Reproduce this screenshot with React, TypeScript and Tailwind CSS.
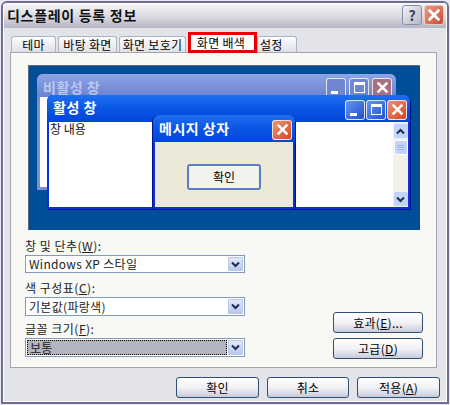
import React from "react";

const font = { fontFamily: '"Noto Sans CJK KR", "Liberation Sans", sans-serif' };

function Chevron({ className = "" }: { className?: string }) {
  return (
    <svg width="9" height="7" viewBox="0 0 9 7" className={className}>
      <path d="M1 1.5 L4.5 5 L8 1.5" fill="none" stroke="#1f2a55" strokeWidth="2" />
    </svg>
  );
}

function CloseX({ size = 12 }: { size?: number }) {
  return (
    <svg width={size} height={size} viewBox="0 0 12 12">
      <path d="M1.5 1.5 L10.5 10.5 M10.5 1.5 L1.5 10.5" stroke="#fff" strokeWidth="2.4" />
    </svg>
  );
}

function Tab({ label, className }: { label: string; className: string }) {
  return (
    <div className={`${className} h-[17px] mt-[8px] rounded-t-[3px] border border-b-0 border-[#a9b4c4] bg-gradient-to-b from-white to-[#dddde6] flex items-center text-[12px] text-black tracking-[0.3px]`}>
      {label}
    </div>
  );
}

function Btn({ children, w }: { children: React.ReactNode; w: string }) {
  return (
    <div className={`${w} h-[21px] rounded-[3px] border border-[#2f4f73] bg-gradient-to-b from-white via-[#f2f2f6] to-[#c9cbdb] flex items-center justify-center text-[12px] text-black tracking-[0.3px]`}>
      {children}
    </div>
  );
}

function Select({ text, selected, h = "h-[18px]" }: { text: string; selected?: boolean; h?: string }) {
  return (
    <div className={`w-[220px] ${h} border border-[#7f9db9] bg-white flex items-stretch p-px`}>
      <div className={`flex-1 flex items-center pl-[2px] text-[12px] text-[#222] tracking-[0.3px] ${selected ? "bg-[#b2b4bf] border border-dotted border-black pl-[1px]" : ""}`}>
        {text}
      </div>
      <div className="w-[15px] ml-px rounded-[1px] border border-[#b9c6e6] bg-gradient-to-b from-[#e4e9f6] to-[#b8c8ee] flex items-center justify-center">
        <Chevron />
      </div>
    </div>
  );
}

function Label({ before, k, after = "):" }: { before: string; k: string; after?: string }) {
  return (
    <div className="h-[18px] flex items-center text-[12px] text-[#222] tracking-[0.5px] whitespace-pre">
      {before}(<span className="underline">{k}</span>{after}
    </div>
  );
}

function MiniBtn({ kind, dim }: { kind: "min" | "max" | "close"; dim?: boolean }) {
  const bg =
    kind === "close"
      ? dim
        ? "bg-[#a7707f]"
        : "bg-gradient-to-br from-[#e89274] to-[#d8431c]"
      : dim
        ? "bg-[#6f87cf]"
        : "bg-gradient-to-br from-[#6a94f0] to-[#1f4fd0]";
  return (
    <div className={`w-[20px] h-[20px] rounded-[3px] border border-white/80 ${bg} flex items-center justify-center shrink-0`}>
      {kind === "min" && <div className="w-[7px] h-[3px] bg-white mt-[9px] -ml-[3px]" />}
      {kind === "max" && <div className="w-[11px] h-[11px] border border-white border-t-[3px]" />}
      {kind === "close" && <CloseX size={13} />}
    </div>
  );
}

export default function App() {
  return (
    <div style={font} className="w-[450px] h-[405px] bg-[#e8e8ee] p-px flex antialiased">
      <div className="flex-1 flex border-2 border-[#6d6d8e] rounded-t-[6px] overflow-hidden">
        <div className="flex-1 flex flex-col border border-white bg-[#e3e3ea] min-w-0">
          <div className="h-[24px] shrink-0 bg-gradient-to-b from-[#f4f4f7] via-[#dcdce4] to-[#b5b5c4] flex items-start pt-px pl-[3px] pr-[2px]">
            <div className="text-[14px] leading-[20px] font-bold text-[#111] tracking-[0.7px] flex-1">디스플레이 등록 정보</div>
            <div className="w-[20px] h-[20px] rounded-[3px] border border-[#8a8fa8] bg-gradient-to-br from-[#f4f4f8] to-[#b4b6c8] flex items-center justify-center text-[14px] font-bold text-[#3a4060] mr-[2px]">?</div>
            <div className="w-[20px] h-[20px] rounded-[3px] border border-[#e8c8c0] bg-gradient-to-br from-[#e89c88] to-[#c9492f] flex items-center justify-center">
              <CloseX size={14} />
            </div>
          </div>

          <div className="flex pl-[7px] h-[24px] shrink-0 items-start">
            <Tab label="테마" className="w-[45px] ml-0 justify-center" />
            <Tab label="바탕 화면" className="w-[59px] ml-[2px] justify-center" />
            <Tab label="화면 보호기" className="w-[67px] ml-[2px] justify-center" />
            <div className="relative z-10 w-[69px] h-[21px] mt-[4px] ml-[2px] border-[3px] border-[#e80000] bg-white flex items-center justify-center text-[12px] text-black tracking-[0.3px] pr-[3px]">화면 배색</div>
            <Tab label="설정" className="w-[40px] pl-[2px]" />
          </div>

          <div className="ml-[6px] w-[427px] h-[316px] shrink-0 border border-[#a6a6ae] bg-[#f8f8f5] flex flex-col pl-[14px]">
            <div className="relative ml-[3px] mt-[12px] w-[392px] h-[165px] shrink-0 bg-[#004e98] border-t border-l border-t-[#5c6a80] border-l-[#5c6a80] overflow-hidden">
              {/* inactive window */}
              <div className="absolute left-[8px] top-[8px] w-[359px] h-[116px] rounded-t-[6px] bg-[#7a8ed8] flex flex-col">
                <div className="h-[23px] shrink-0 flex items-center pt-[4px] pl-[6px] pr-[4px] gap-[3px] rounded-t-[6px] bg-gradient-to-b from-[#8da4e6] to-[#6b82d0]">
                  <div className="flex-1 text-[14px] font-bold text-[#b9c8ee] tracking-[0.5px]">비활성 창</div>
                  <MiniBtn kind="min" dim />
                  <MiniBtn kind="max" dim />
                  <MiniBtn kind="close" dim />
                </div>
                <div className="flex-1 mx-[3px] mb-[3px] bg-white" />
              </div>
              {/* active window */}
              <div className="absolute left-[18px] top-[29px] w-[363px] h-[114px] rounded-t-[6px] bg-[#0831d9] flex flex-col shadow-[1px_1px_0_#00138c]">
                <div className="h-[27px] shrink-0 flex items-center pt-[2px] pl-[6px] pr-[3px] gap-[1px] rounded-t-[6px] bg-gradient-to-b from-[#1f6ff0] via-[#0a55e5] to-[#0345d8]">
                  <div className="flex-1 pb-[4px] text-[14px] font-bold text-white tracking-[0.5px]">활성 창</div>
                  <MiniBtn kind="min" />
                  <MiniBtn kind="max" />
                  <MiniBtn kind="close" />
                </div>
                <div className="flex-1 mx-[2px] mb-[2px] bg-white flex justify-between">
                  <div className="pl-[1px] text-[12px] leading-[14px] text-[#111]">창 내용</div>
                  <div className="w-[15px] bg-[#f1f1ea] flex flex-col items-center justify-between pb-px pt-[2px]">
                    <div className="flex flex-col items-center gap-[2px]">
                      <div className="w-[14px] h-[14px] rounded-[2px] bg-[#c3d4fb] flex items-center justify-center">
                        <Chevron className="rotate-180" />
                      </div>
                      <div className="w-[14px] h-[15px] rounded-[2px] bg-[#c3d4fb] border border-white flex flex-col items-center justify-center gap-px">
                        <div className="w-[7px] h-px bg-[#9fb4e8]" />
                        <div className="w-[7px] h-px bg-[#9fb4e8]" />
                        <div className="w-[7px] h-px bg-[#9fb4e8]" />
                      </div>
                    </div>
                    <div className="w-[14px] h-[14px] rounded-[2px] bg-[#c3d4fb] flex items-center justify-center">
                      <Chevron />
                    </div>
                  </div>
                </div>
              </div>
              {/* message box */}
              <div className="absolute left-[124px] top-[49px] w-[142px] h-[94px] rounded-t-[6px] bg-[#0831d9] flex flex-col shadow-[1px_1px_0_#00138c,-1px_0_0_#00138c]">
                <div className="h-[27px] shrink-0 flex items-center pt-[2px] pl-[6px] pr-[3px] rounded-t-[6px] bg-gradient-to-b from-[#1f6ff0] via-[#0a55e5] to-[#0345d8]">
                  <div className="flex-1 pb-[3px] text-[14px] font-bold text-white tracking-[0.5px]">메시지 상자</div>
                  <MiniBtn kind="close" />
                </div>
                <div className="flex-1 mx-[2px] mb-[2px] bg-[#ece9d8] flex items-center justify-center pt-[5px]">
                  <div className="w-[74px] h-[26px] rounded-[3px] border-2 border-[#5b7fc4] bg-[#f3f3ee] flex items-center justify-center text-[12px] text-black">확인</div>
                </div>
              </div>
            </div>

            <div className="flex items-start mt-[7px]">
              <div className="flex flex-col w-[220px]">
                <Label before="창 및 단추" k="W" />
                <Select text="Windows XP 스타일" />
                <div className="h-[6px]" />
                <Label before="색 구성표" k="C" />
                <Select text="기본값(파랑색)" h="h-[19px]" />
                <div className="h-[4px]" />
                <Label before="글꼴 크기" k="F" />
                <Select text="보통" selected h="h-[19px]" />
              </div>
              <div className="flex flex-col gap-[5px] ml-[88px] mt-[75px]">
                <Btn w="w-[90px]">
                  <span>효과(<span className="underline">E</span>)...</span>
                </Btn>
                <Btn w="w-[90px]">
                  <span>고급(<span className="underline">D</span>)</span>
                </Btn>
              </div>
            </div>
          </div>

          <div className="flex justify-end gap-[8px] mt-[9px] pr-[6px]">
            <Btn w="w-[83px]">확인</Btn>
            <Btn w="w-[82px]">취소</Btn>
            <Btn w="w-[83px]">
              <span>적용(<span className="underline">A</span>)</span>
            </Btn>
          </div>
        </div>
      </div>
    </div>
  );
}
